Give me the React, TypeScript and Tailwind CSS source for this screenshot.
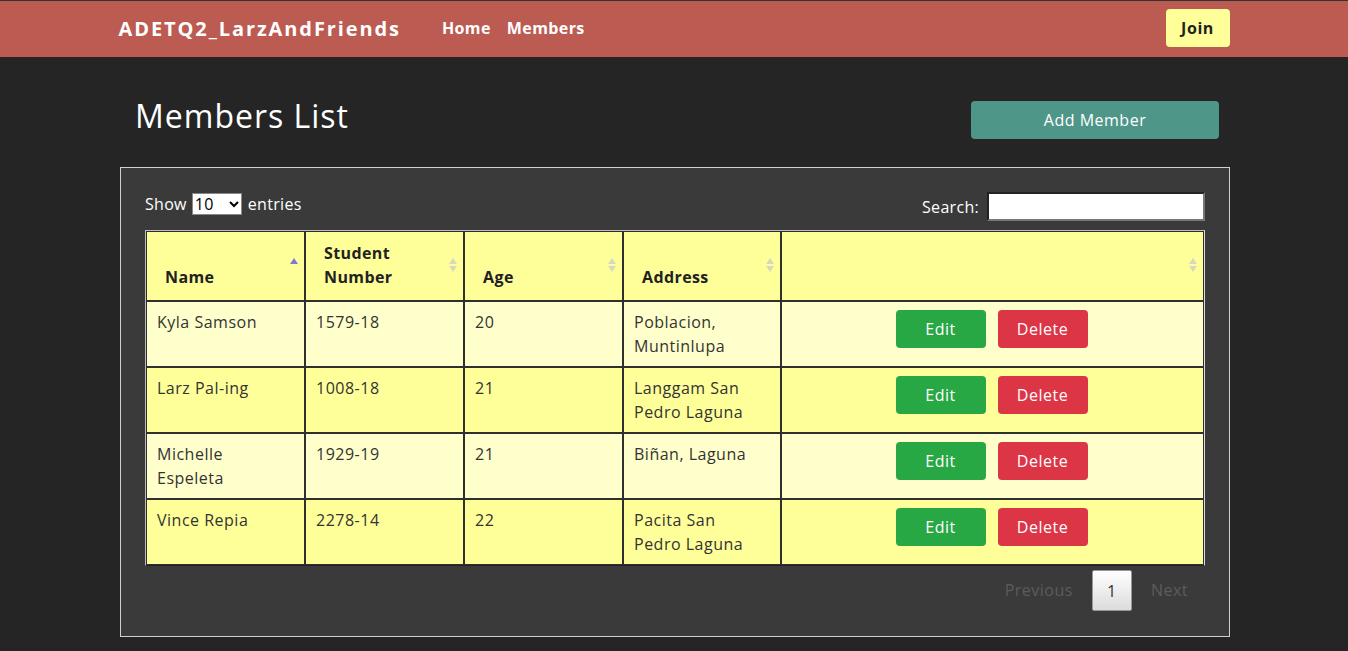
import React from "react";

const rows = [
  { name: ["Kyla Samson"], num: "1579-18", age: "20", addr: ["Poblacion,", "Muntinlupa"] },
  { name: ["Larz Pal-ing"], num: "1008-18", age: "21", addr: ["Langgam San", "Pedro Laguna"] },
  { name: ["Michelle", "Espeleta"], num: "1929-19", age: "21", addr: ["Biñan, Laguna"] },
  { name: ["Vince Repia"], num: "2278-14", age: "22", addr: ["Pacita San", "Pedro Laguna"] },
];

function SortIcon({ active }: { active?: boolean }) {
  return (
    <svg className="absolute right-[6px] top-[25px]" width="8" height="16" viewBox="0 0 8 16">
      <polygon points="4,1 8,7 0,7" fill={active ? "#7a7ad6" : "#d8d8c0"} />
      {!active && <polygon points="0,9 8,9 4,15" fill="#d8d8c0" />}
    </svg>
  );
}

export default function App() {
  const font = { fontFamily: '"Open Sans", "Noto Sans", sans-serif' };
  const td = "border border-[#2f2f2f] align-top px-[10px] pt-[8px] leading-[24px] text-[16px] text-[#333] tracking-[0.5px]";
  return (
    <div className="min-h-[651px] bg-[#252525] pl-[2px]" style={font}>
      <div className="border-t border-[#333] -ml-[2px]">
        <nav className="h-[56px] bg-[#bc5b52] flex items-center">
          <div className="w-[1111px] mx-auto flex items-center">
            <div className="text-white font-bold text-[20px] tracking-[1.9px] -mt-[1px]">ADETQ2_LarzAndFriends</div>
            <div className="flex gap-[16px] ml-[41px] text-white font-bold text-[16px] tracking-[0.4px] -mt-[2px]">
              <span>Home</span>
              <span>Members</span>
            </div>
            <div className="ml-auto h-[38px] w-[64px] rounded-[4px] bg-[#ffff99] flex items-center justify-center text-[#222] font-bold text-[16px] tracking-[0.6px] -mt-[2px]">
              Join
            </div>
          </div>
        </nav>
      </div>

      <div className="w-[1110px] mx-auto">
        <div className="flex items-start justify-between pt-[44px] pl-[15px] pr-[11px]">
          <h1 className="text-white text-[32px] leading-[32px] -mt-[1px] tracking-[1px]">Members List</h1>
          <div className="w-[248px] h-[38px] rounded-[4px] bg-[#4e9688] text-white text-[16px] flex items-center justify-center tracking-[0.5px]">
            Add Member
          </div>
        </div>

        <div className="mt-[28px] border border-[#d0d0d0] bg-[#3a3a3a] px-[24px] pt-[24px] pb-[25px]">
          <div className="flex items-center justify-between h-[29px] mb-[9px]">
            <div className="flex items-center text-white text-[16px] -mt-[6px] tracking-[0.3px]">
              <span>Show</span>
              <div className="ml-[5px] mr-[6px] w-[50px] h-[22px] bg-white border border-[#888] flex items-center justify-between px-[2px] text-black text-[16px]">
                <span>10</span>
                <svg width="10" height="8" viewBox="0 0 10 8"><polyline points="1,2 5,6 9,2" fill="none" stroke="#000" strokeWidth="2" /></svg>
              </div>
              <span>entries</span>
            </div>
            <div className="flex items-center text-white text-[16px]">
              <span className="mr-[8px] tracking-[0.3px]">Search:</span>
              <div className="w-[218px] h-[29px] bg-white border-2 border-t-[#222] border-l-[#222] border-b-[#777] border-r-[#777]" />
            </div>
          </div>

          <table className="table-fixed w-[1060px] border-separate border-spacing-0 border border-t-[#bbb] border-l-[#bbb] border-b-[#222] border-r-[#ddd] text-[#222]">
            <colgroup>
              <col className="w-[159px]" />
              <col className="w-[159px]" />
              <col className="w-[159px]" />
              <col className="w-[158px]" />
              <col />
            </colgroup>
            <thead>
              <tr className="bg-[#ffff99] text-[16px] font-bold tracking-[0.4px]">
                <th className="relative h-[70px] border border-[#2f2f2f] align-bottom text-left pl-[18px] pb-[11px] leading-[24px]">Name<SortIcon active /></th>
                <th className="relative border border-[#2f2f2f] align-bottom text-left pl-[18px] pb-[11px] leading-[24px]">Student<br />Number<SortIcon /></th>
                <th className="relative border border-[#2f2f2f] align-bottom text-left pl-[18px] pb-[11px] leading-[24px]">Age<SortIcon /></th>
                <th className="relative border border-[#2f2f2f] align-bottom text-left pl-[18px] pb-[11px] leading-[24px]">Address<SortIcon /></th>
                <th className="relative border border-[#2f2f2f]"><SortIcon /></th>
              </tr>
            </thead>
            <tbody>
              {rows.map((r, i) => (
                <tr key={i} className={i % 2 === 0 ? "bg-[#ffffcc]" : "bg-[#ffff99]"}>
                  <td className={"h-[66px] " + td}>
                    {r.name.map((n, k) => <div key={k}>{n}</div>)}
                  </td>
                  <td className={td}>{r.num}</td>
                  <td className={td}>{r.age}</td>
                  <td className={td}>
                    {r.addr.map((n, k) => <div key={k}>{n}</div>)}
                  </td>
                  <td className="border border-[#2f2f2f] align-top pt-[8px]">
                    <div className="flex justify-center gap-[12px] tracking-[0.5px] pr-[2px]">
                      <div className="w-[90px] h-[38px] rounded-[4px] bg-[#28a745] text-white text-[16px] flex items-center justify-center">Edit</div>
                      <div className="w-[90px] h-[38px] rounded-[4px] bg-[#dc3545] text-white text-[16px] flex items-center justify-center">Delete</div>
                    </div>
                  </td>
                </tr>
              ))}
            </tbody>
          </table>

          <div className="flex justify-end items-center mt-[4px] h-[41px] text-[16px] pr-[17px] tracking-[0.5px]">
            <span className="text-[#5c5c5c] mr-[19px] -mt-[2px]">Previous</span>
            <div className="w-[40px] h-[41px] border border-[#979797] rounded-[2px] bg-gradient-to-b from-white to-[#dcdcdc] flex items-center justify-center text-[#333]">1</div>
            <span className="text-[#5c5c5c] ml-[19px] -mt-[2px]">Next</span>
          </div>
        </div>
      </div>
    </div>
  );
}
